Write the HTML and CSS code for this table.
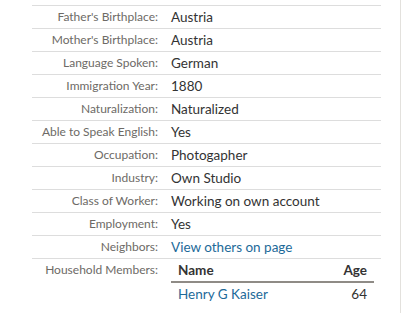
FILE: index.html
```html
<!DOCTYPE html>
<html>
<head>
<meta charset="utf-8">
<link rel="stylesheet" href="styles.css">
</head>
<body>
<div class="frame">
  <div class="details">
    <div class="row"><div class="label">Father's Birthplace:</div><div class="value">Austria</div></div>
    <div class="row"><div class="label">Mother's Birthplace:</div><div class="value">Austria</div></div>
    <div class="row"><div class="label">Language Spoken:</div><div class="value">German</div></div>
    <div class="row"><div class="label">Immigration Year:</div><div class="value">1880</div></div>
    <div class="row"><div class="label">Naturalization:</div><div class="value">Naturalized</div></div>
    <div class="row"><div class="label">Able to Speak English:</div><div class="value">Yes</div></div>
    <div class="row"><div class="label">Occupation:</div><div class="value">Photogapher</div></div>
    <div class="row"><div class="label">Industry:</div><div class="value">Own Studio</div></div>
    <div class="row"><div class="label">Class of Worker:</div><div class="value">Working on own account</div></div>
    <div class="row"><div class="label">Employment:</div><div class="value">Yes</div></div>
    <div class="row"><div class="label">Neighbors:</div><div class="value"><a class="link" href="#">View others on page</a></div></div>
    <div class="row"><div class="label">Household Members:</div>
      <div class="value">
        <table class="household">
          <thead><tr><th class="name">Name</th><th class="age">Age</th></tr></thead>
          <tbody><tr><td class="name"><a class="link" href="#">Henry G Kaiser</a></td><td class="age">64</td></tr></tbody>
        </table>
      </div>
    </div>
  </div>
</div>
</body>
</html>
```
FILE: styles.css
```css
html, body {
  margin: 0;
  padding: 0;
  background: #fff;
}
body {
  font-family: Lato, "Open Sans", sans-serif;
}
.frame {
  width: 400px;
  height: 313px;
  border-right: 1px solid #e3e1dd;
  overflow: hidden;
}
.details {
  margin-left: 32px;
  width: 349px;
  padding-top: 5px;
}
.row {
  display: grid;
  grid-template-columns: 126px 1fr;
  column-gap: 13px;
  border-top: 1px solid #dddddd;
  line-height: 22px;
}
.label {
  text-align: right;
  color: #6d6a66;
  font-size: 12px;
  white-space: nowrap;
}
.value {
  color: #333;
  font-size: 13.5px;
  white-space: nowrap;
}
.link {
  color: #1d6a99;
  text-decoration: none;
}
.household {
  width: 203px;
  border-collapse: collapse;
  font-size: 13.5px;
}
.household th {
  font-weight: 700;
  color: #333;
  line-height: 22px;
  padding: 0 7px;
  border-bottom: 2px solid #8f8b86;
}
.household td {
  line-height: 22px;
  padding: 0 7px;
}
.household .name { text-align: left; }
.household .age { text-align: right; }
```
